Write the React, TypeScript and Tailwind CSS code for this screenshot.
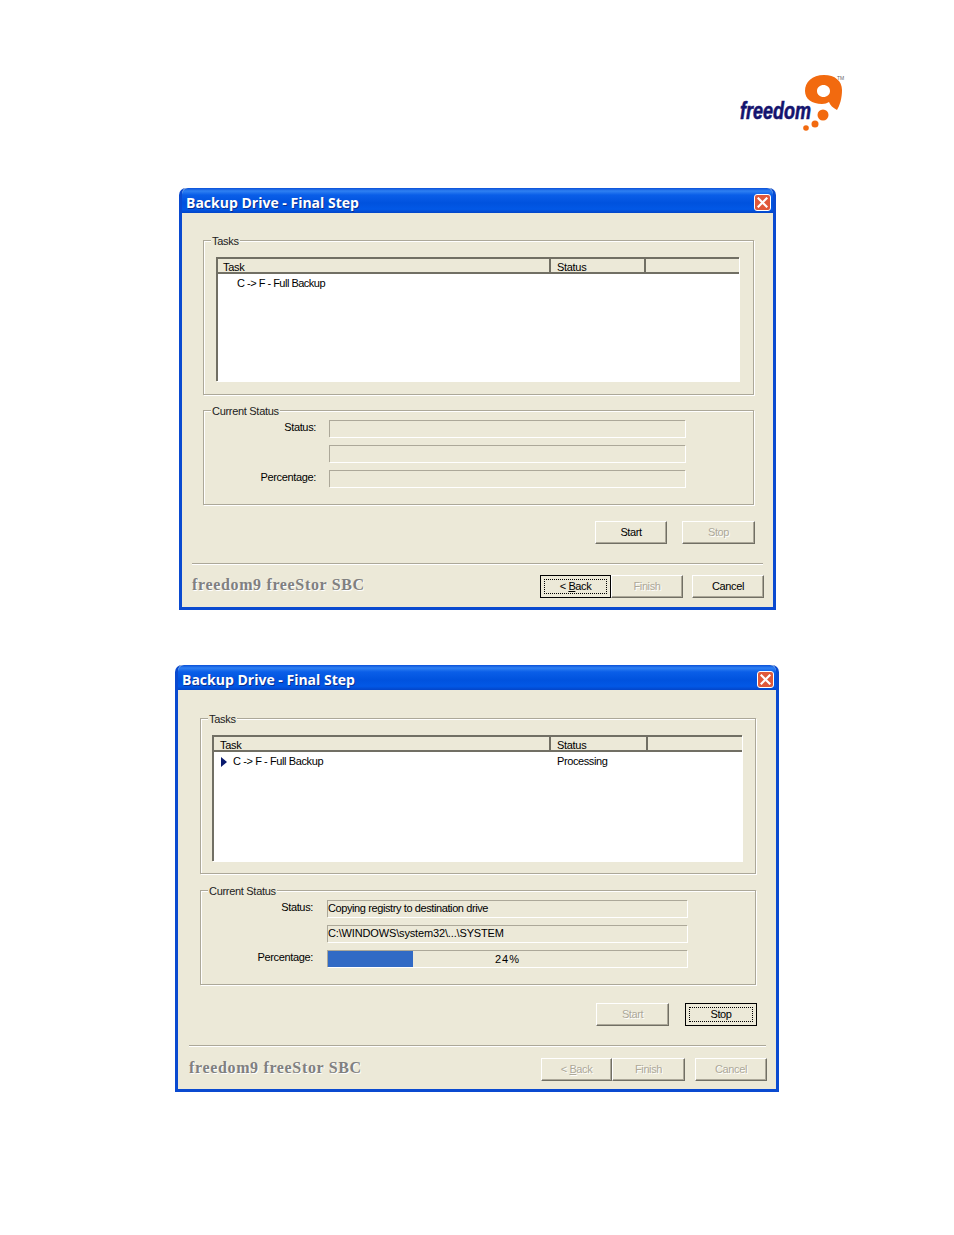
import React from "react";

const Logo = () => (
  <svg width="108" height="60" viewBox="0 0 108 60" className="block">
    <path
      fill="#f26a0f"
      fillRule="evenodd"
      d="M84 1C72 1 65 8 65 17C65 25 72 30 82 30C85 30 87 29 89 28C90 31 93 34 97 36C100 31 102 24 102 16C102 7 95 1 84 1ZM83.5 11C87 11 90 13.5 90 17C90 20.5 87 23 83.5 23C80 23 77 20.5 77 17C77 13.5 80 11 83.5 11Z"
    />
    <circle cx="83" cy="41" r="5.5" fill="#f26a0f" />
    <circle cx="75" cy="50" r="3.5" fill="#f26a0f" />
    <circle cx="66" cy="54" r="2.8" fill="#f26a0f" />
    <text
      x="0"
      y="45"
      fontFamily="'Liberation Sans', sans-serif"
      fontSize="23"
      fontWeight="700"
      fontStyle="italic"
      fill="#14146e"
      stroke="#14146e"
      strokeWidth="0.6"
      textLength="71"
      lengthAdjust="spacingAndGlyphs"
    >
      freedom
    </text>
    <text x="97" y="6" fontFamily="'Liberation Sans', sans-serif" fontSize="5" fill="#666">
      TM
    </text>
  </svg>
);

const TitleBar = () => (
  <div className="flex h-[25px] items-center justify-between rounded-t-[6px] bg-[linear-gradient(180deg,#0a50d8_0%,#2f80f2_12%,#0a5ee8_28%,#0052de_60%,#0258e6_85%,#0345c8_100%)] pl-[4px] pr-[2px] pt-[3px]">
    <span className="text-[14px] font-bold text-white [font-family:'Open_Sans',sans-serif] [text-shadow:1px_1px_0_#0b2f8f]">
      Backup Drive - Final Step
    </span>
    <span className="flex h-[17px] w-[17px] items-center justify-center rounded-[3px] border border-white bg-[#e0593a]">
      <svg width="11" height="11" viewBox="0 0 11 11">
        <path d="M1.5 1.5L9.5 9.5M9.5 1.5L1.5 9.5" stroke="#fff" strokeWidth="2.2" strokeLinecap="square" />
      </svg>
    </span>
  </div>
);

type BtnProps = {
  label: React.ReactNode;
  width: string;
  disabled?: boolean;
  focused?: boolean;
};

const Btn = ({ label, width, disabled, focused }: BtnProps) => {
  if (focused) {
    return (
      <div className={`${width} flex h-[23px] shrink-0 border border-black p-[3px] text-[11px] leading-none tracking-[-0.4px] text-black`}>
        <div className="flex flex-1 items-center justify-center border border-dotted border-black">{label}</div>
      </div>
    );
  }
  return (
    <div
      className={`${width} flex h-[23px] shrink-0 items-center justify-center border border-t-white border-l-white border-r-[#716f64] border-b-[#716f64] pb-px text-[11px] leading-none tracking-[-0.4px] shadow-[inset_-1px_-1px_0_#aca899] ${
        disabled ? "text-[#aca899] [text-shadow:1px_1px_0_#fff]" : "text-black"
      }`}
    >
      {label}
    </div>
  );
};

const Group = ({ label, className, children }: { label: string; className: string; children: React.ReactNode }) => (
  <div className={`relative border border-[#aca899] shadow-[inset_1px_1px_0_#fff,1px_1px_0_#fff] ${className}`}>
    <span className="absolute -top-[7px] left-[7px] bg-[#ece9d8] px-px text-[11px] leading-[15px] tracking-[-0.3px] text-[#222]">
      {label}
    </span>
    {children}
  </div>
);

const Back = (
  <span>
    &lt; <span className="underline">B</span>ack
  </span>
);

const FieldRow = ({ label, labelWidth, className, children }: { label?: string; labelWidth: string; className: string; children?: React.ReactNode }) => (
  <div className="flex items-start">
    <span className={`${labelWidth} shrink-0 pr-[13px] text-right text-[11px] leading-[15px] tracking-[-0.35px] text-black`}>{label}</span>
    <div className={`relative h-[17px] border-t border-l border-t-[#aca899] border-l-[#aca899] shadow-[1px_1px_0_#fff] ${className}`}>
      {children}
    </div>
  </div>
);

const FirstDialog = () => (
  <div className="ml-[179px] flex h-[422px] w-[597px] flex-col rounded-t-[7px] border-x-[3px] border-b-[3px] border-[#0a4ad0] bg-[#ece9d8] [font-family:'Liberation_Sans',sans-serif]">
    <TitleBar />
    <Group label="Tasks" className="ml-[21px] mt-[27px] h-[155px] w-[551px] shrink-0 pl-[12px] pt-[16px]">
      <div className="h-[124px] w-[523px] border-t-2 border-l-2 border-t-[#716f64] border-l-[#716f64] bg-white shadow-[1px_1px_0_#fff]">
        <div className="flex h-[15px] border-b-2 border-[#716f64] bg-[#ece9d8] text-[11px] leading-[17px] tracking-[-0.3px] text-black">
          <span className="w-[333px] border-r-2 border-[#716f64] pl-[5px]">Task</span>
          <span className="w-[95px] border-r-2 border-[#716f64] pl-[6px]">Status</span>
        </div>
        <div className="pl-[19px] pt-[2px] text-[11px] leading-[15px] tracking-[-0.5px] text-black">C -&gt; F - Full Backup</div>
      </div>
    </Group>
    <Group label="Current Status" className="ml-[21px] mt-[15px] flex h-[95px] w-[551px] shrink-0 flex-col gap-[8px] pt-[9px]">
      <FieldRow label="Status:" labelWidth="w-[125px]" className="w-[356px]" />
      <FieldRow labelWidth="w-[125px]" className="w-[356px]" />
      <FieldRow label="Percentage:" labelWidth="w-[125px]" className="w-[356px]" />
    </Group>
    <div className="ml-[413px] mt-[16px] flex gap-[15px]">
      <Btn label="Start" width="w-[72px]" />
      <Btn label="Stop" width="w-[73px]" disabled />
    </div>
    <div className="ml-[10px] mt-[19px] h-[2px] w-[571px] border-t border-[#aca899] bg-white" />
    <div className="ml-[10px] mt-[10px] flex items-start">
      <span className="-mt-[2px] w-[348px] text-[16px] font-bold leading-[23px] tracking-[0.65px] text-[#808080] [font-family:'Liberation_Serif',serif] [text-shadow:1px_1px_0_#fff]">
        freedom9 freeStor SBC
      </span>
      <Btn label={Back} width="w-[71px]" focused />
      <Btn label="Finish" width="w-[72px]" disabled />
      <span className="w-[9px]" />
      <Btn label="Cancel" width="w-[72px]" />
    </div>
  </div>
);

const SecondDialog = () => (
  <div className="ml-[175px] mt-[55px] flex h-[427px] w-[604px] flex-col rounded-t-[7px] border-x-[3px] border-b-[3px] border-[#0a4ad0] bg-[#ece9d8] [font-family:'Liberation_Sans',sans-serif]">
    <TitleBar />
    <Group label="Tasks" className="ml-[22px] mt-[28px] h-[156px] w-[556px] shrink-0 pl-[11px] pt-[16px]">
      <div className="h-[126px] w-[530px] border-t-2 border-l-2 border-t-[#716f64] border-l-[#716f64] bg-white shadow-[1px_1px_0_#fff]">
        <div className="flex h-[15px] border-b-2 border-[#716f64] bg-[#ece9d8] text-[11px] leading-[17px] tracking-[-0.3px] text-black">
          <span className="w-[337px] border-r-2 border-[#716f64] pl-[6px]">Task</span>
          <span className="w-[97px] border-r-2 border-[#716f64] pl-[6px]">Status</span>
        </div>
        <div className="flex pt-[2px] text-[11px] leading-[15px] tracking-[-0.4px] text-black">
          <span className="flex h-[15px] w-[19px] items-center pl-[7px]">
            <svg width="6" height="10" viewBox="0 0 6 10">
              <path d="M0 0L6 5L0 10Z" fill="#0a1a6e" />
            </svg>
          </span>
          <span className="w-[324px]">C -&gt; F - Full Backup</span>
          <span>Processing</span>
        </div>
      </div>
    </Group>
    <Group label="Current Status" className="ml-[22px] mt-[16px] flex h-[95px] w-[556px] shrink-0 flex-col gap-[8px] pt-[9px]">
      <FieldRow label="Status:" labelWidth="w-[125px]" className="ml-px w-[360px]">
        <span className="block text-[11px] leading-[15px] tracking-[-0.4px] text-black">Copying registry to destination drive</span>
      </FieldRow>
      <FieldRow labelWidth="w-[125px]" className="ml-px w-[360px]">
        <span className="block text-[11px] leading-[15px] tracking-[-0.15px] text-black">C:\WINDOWS\system32\...\SYSTEM</span>
      </FieldRow>
      <FieldRow label="Percentage:" labelWidth="w-[125px]" className="ml-px w-[360px]">
        <div className="h-[16px] w-[85px] bg-[#316ac5]" />
        <span className="absolute inset-0 text-center text-[11px] leading-[17px] tracking-[1px] text-black">24%</span>
      </FieldRow>
    </Group>
    <div className="ml-[418px] mt-[18px] flex gap-[16px]">
      <Btn label="Start" width="w-[73px]" disabled />
      <Btn label="Stop" width="w-[72px]" focused />
    </div>
    <div className="ml-[11px] mt-[19px] h-[2px] w-[577px] border-t border-[#aca899] bg-white" />
    <div className="ml-[11px] mt-[11px] flex items-start">
      <span className="-mt-[2px] w-[352px] text-[16px] font-bold leading-[23px] tracking-[0.65px] text-[#808080] [font-family:'Liberation_Serif',serif] [text-shadow:1px_1px_0_#fff]">
        freedom9 freeStor SBC
      </span>
      <Btn label={Back} width="w-[71px]" disabled />
      <Btn label="Finish" width="w-[73px]" disabled />
      <span className="w-[10px]" />
      <Btn label="Cancel" width="w-[72px]" disabled />
    </div>
  </div>
);

export default function App() {
  return (
    <div className="h-[1235px] w-[954px] overflow-hidden bg-white pt-[74px]">
      <div className="ml-[740px] h-[114px]">
        <Logo />
      </div>
      <FirstDialog />
      <SecondDialog />
    </div>
  );
}
